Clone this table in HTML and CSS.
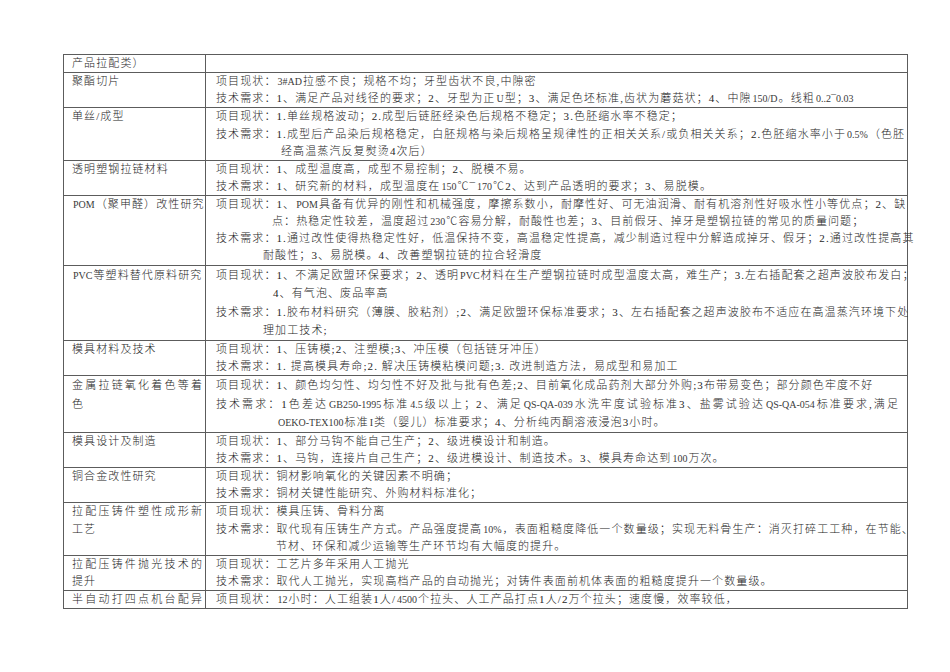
FILE: index.html
```html
<!DOCTYPE html>
<html lang="zh-CN">
<head>
<meta charset="utf-8">
<title>产品拉配类</title>
<link rel="stylesheet" href="styles.css">
</head>
<body>
<div class="sheet">
  <div class="row">
    <div class="name"><div class="ln">产品拉配类）</div></div>
    <div class="desc"></div>
  </div>

  <div class="row">
    <div class="name"><div class="ln">聚酯切片</div></div>
    <div class="desc">
      <div class="ln">项目现状：<span class="en">3#AD</span>拉感不良；规格不均；牙型齿状不良,中隙密</div>
      <div class="ln">技术需求：1、满足产品对线径的要求；2、牙型为正<span class="en">U</span>型；3、满足色坯标准,齿状为蘑菇状；4、中隙<span class="en">150/D</span>。线粗<span class="en">0..2¯0.03</span></div>
    </div>
  </div>

  <div class="row">
    <div class="name"><div class="ln">单丝/成型</div></div>
    <div class="desc">
      <div class="ln">项目现状：1.单丝规格波动；2.成型后链胚经染色后规格不稳定；3.色胚缩水率不稳定；</div>
      <div class="ln full">技术需求：1.成型后产品染后规格稳定，白胚规格与染后规格呈规律性的正相关关系/或负相关关系；2.色胚缩水率小于<span class="en">0.5%</span>（色胚</div>
      <div class="ln in-65">经高温蒸汽反复熨烫4次后）</div>
    </div>
  </div>

  <div class="row">
    <div class="name"><div class="ln">透明塑钢拉链材料</div></div>
    <div class="desc">
      <div class="ln">项目现状：1、成型温度高，成型不易控制；2、脱模不易。</div>
      <div class="ln">技术需求：1、研究新的材料，成型温度在<span class="en">150</span>℃¯<span class="en">170</span>℃2、达到产品透明的要求；3、易脱模。</div>
    </div>
  </div>

  <div class="row">
    <div class="name"><div class="ln"><span class="en">POM</span>（聚甲醛）改性研究</div></div>
    <div class="desc">
      <div class="ln full">项目现状：1、<span class="en">POM</span>具备有优异的刚性和机械强度，摩擦系数小，耐摩性好、可无油润滑、耐有机溶剂性好吸水性小等优点；2、缺</div>
      <div class="ln in-56">点：热稳定性较差，温度超过<span class="en">230</span>℃容易分解，耐酸性也差；3、目前假牙、掉牙是塑钢拉链的常见的质量问题；</div>
      <div class="ln full">技术需求：1.通过改性使得热稳定性好，低温保持不变，高温稳定性提高，减少制造过程中分解造成掉牙、假牙；2.通过改性提高其</div>
      <div class="ln in-47">耐酸性；3、易脱模。4、改善塑钢拉链的拉合轻滑度</div>
    </div>
  </div>

  <div class="row tall">
    <div class="name"><div class="ln"><span class="en">PVC</span>等塑料替代原料研究</div></div>
    <div class="desc">
      <div class="ln full">项目现状：1、不满足欧盟环保要求；2、透明<span class="en">PVC</span>材料在生产塑钢拉链时成型温度太高，难生产；3.左右插配套之超声波胶布发白；</div>
      <div class="ln in-57">4、有气泡、废品率高</div>
      <div class="ln full">技术需求：1.胶布材料研究（薄膜、胶粘剂）;2、满足欧盟环保标准要求；3、左右插配套之超声波胶布不适应在高温蒸汽环境下处</div>
      <div class="ln in-47">理加工技术;</div>
    </div>
  </div>

  <div class="row">
    <div class="name"><div class="ln">模具材料及技术</div></div>
    <div class="desc">
      <div class="ln">项目现状：1、压铸模;2、注塑模;3、冲压模（包括链牙冲压）</div>
      <div class="ln">技术需求：1. 提高模具寿命;2. 解决压铸模粘模问题;3. 改进制造方法，易成型和易加工</div>
    </div>
  </div>

  <div class="row tall">
    <div class="name">
      <div class="ln full">金属拉链氧化着色等着</div>
      <div class="ln">色</div>
    </div>
    <div class="desc">
      <div class="ln">项目现状：1、颜色均匀性、均匀性不好及批与批有色差;2、目前氧化成品药剂大部分外购;3布带易变色；部分颜色牢度不好</div>
      <div class="ln full">技术需求：1色差达<span class="en">GB250-1995</span>标准<span class="en">4.5</span>级以上；2、满足<span class="en">QS-QA-039</span>水洗牢度试验标准3、盐雾试验达<span class="en">QS-QA-054</span>标准要求,满足</div>
      <div class="ln in-61"><span class="en">OEKO-TEX100</span>标准<span class="en">I</span>类（婴儿）标准要求；4、分析纯丙酮溶液浸泡3小时。</div>
    </div>
  </div>

  <div class="row">
    <div class="name"><div class="ln">模具设计及制造</div></div>
    <div class="desc">
      <div class="ln">项目现状：1、部分马钩不能自己生产；2、级进模设计和制造。</div>
      <div class="ln">技术需求：1、马钩，连接片自己生产；2、级进模设计、制造技术。3、模具寿命达到<span class="en">100</span>万次。</div>
    </div>
  </div>

  <div class="row">
    <div class="name"><div class="ln">铜合金改性研究</div></div>
    <div class="desc">
      <div class="ln">项目现状：铜材影响氧化的关键因素不明确；</div>
      <div class="ln">技术需求：铜材关键性能研究、外购材料标准化；</div>
    </div>
  </div>

  <div class="row">
    <div class="name">
      <div class="ln full">拉配压铸件塑性成形新</div>
      <div class="ln">工艺</div>
    </div>
    <div class="desc">
      <div class="ln">项目现状：模具压铸、骨料分离</div>
      <div class="ln full">技术需求：取代现有压铸生产方式。产品强度提高<span class="en">10%</span>，表面粗糙度降低一个数量级；实现无料骨生产：消灭打碎工工种，在节能、</div>
      <div class="ln in-60">节材、环保和减少运输等生产环节均有大幅度的提升。</div>
    </div>
  </div>

  <div class="row">
    <div class="name">
      <div class="ln full">拉配压铸件抛光技术的</div>
      <div class="ln">提升</div>
    </div>
    <div class="desc">
      <div class="ln">项目现状：工艺片多年采用人工抛光</div>
      <div class="ln">技术需求：取代人工抛光，实现高档产品的自动抛光；对铸件表面前机体表面的粗糙度提升一个数量级。</div>
    </div>
  </div>

  <div class="row">
    <div class="name"><div class="ln full">半自动打四点机台配异</div></div>
    <div class="desc">
      <div class="ln">项目现状：<span class="en">12</span>小时：人工组装1人/<span class="en">4500</span>个拉头、人工产品打点1人/2万个拉头；速度慢，效率较低，</div>
    </div>
  </div>
</div>
</body>
</html>
```

FILE: styles.css
```css
* {
  box-sizing: border-box;
}

html,
body {
  margin: 0;
  padding: 0;
  background: #ffffff;
}

body {
  font-family: "Liberation Serif", "Noto Sans CJK SC", serif;
  font-size: 11px;
  font-weight: 300;
  letter-spacing: 1.1px;
  color: #262626;
}

.sheet {
  display: grid;
  grid-template-columns: 142px 702px;
  width: 845px;
  margin: 54px 0 0 63px;
  border-top: 1px solid #5c5c5c;
  border-left: 1px solid #5c5c5c;
}

.row {
  display: contents;
}

.name,
.desc {
  border-right: 1px solid #5c5c5c;
  border-bottom: 1px solid #5c5c5c;
  line-height: 17.12px;
}

.row.tall > .name,
.row.tall > .desc {
  line-height: 18.6px;
}

.name {
  padding: 0 2px 0 8px;
}

.desc {
  padding: 0 8px 0 10px;
}

.ln {
  white-space: nowrap;
}

.full {
  text-align: justify;
  text-align-last: justify;
}

.en {
  font-size: 10px;
  letter-spacing: 0;
  margin: 0 1px;
  line-height: 1;
  color: #3a3a3a;
}

.in-47 { padding-left: 47px; }
.in-56 { padding-left: 56px; }
.in-57 { padding-left: 57px; }
.in-60 { padding-left: 60px; }
.in-61 { padding-left: 61px; }
.in-65 { padding-left: 65px; }
```
